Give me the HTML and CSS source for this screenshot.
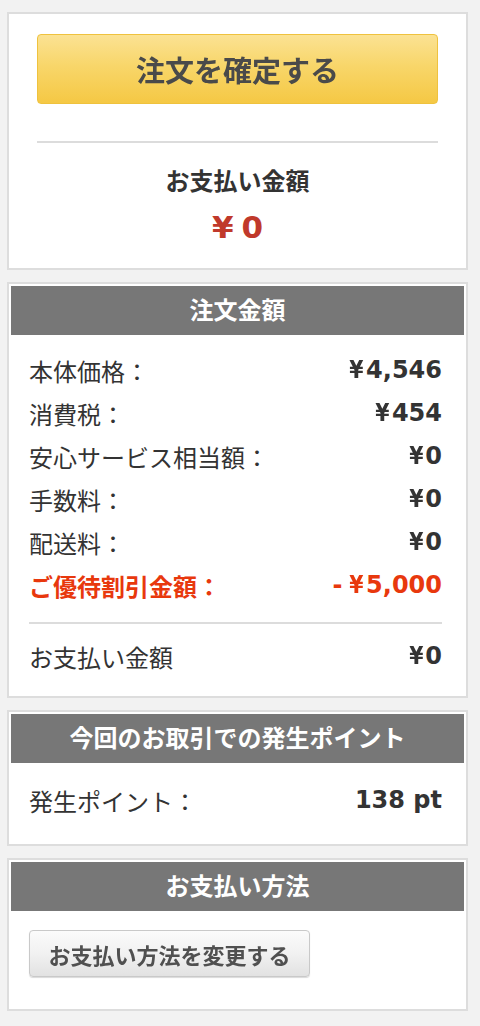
FILE: index.html
```html
<!DOCTYPE html>
<html lang="ja">
<head>
<meta charset="utf-8">
<title>注文確認</title>
<link rel="stylesheet" href="styles.css">
</head>
<body>
<div class="page">
  <section class="card card-confirm">
    <button class="btn-confirm"><span class="btn-label">注文を確定する</span></button>
    <hr class="divider">
    <div class="pay-title">お支払い金額</div>
    <div class="pay-amount"><span class="yen">¥</span>0</div>
  </section>

  <section class="card">
    <h2 class="card-head">注文金額</h2>
    <div class="card-body body-summary">
      <div class="row"><span class="label">本体価格：</span><span class="value"><span class="yen">¥</span>4,546</span></div>
      <div class="row"><span class="label">消費税：</span><span class="value"><span class="yen">¥</span>454</span></div>
      <div class="row"><span class="label">安心サービス相当額：</span><span class="value"><span class="yen">¥</span>0</span></div>
      <div class="row"><span class="label">手数料：</span><span class="value"><span class="yen">¥</span>0</span></div>
      <div class="row"><span class="label">配送料：</span><span class="value"><span class="yen">¥</span>0</span></div>
      <div class="row row-discount"><span class="label">ご優待割引金額：</span><span class="value"><span class="minus">-</span><span class="yen">¥</span>5,000</span></div>
      <hr class="divider divider-summary">
      <div class="row"><span class="label">お支払い金額</span><span class="value"><span class="yen">¥</span>0</span></div>
    </div>
  </section>

  <section class="card">
    <h2 class="card-head">今回のお取引での発生ポイント</h2>
    <div class="card-body body-points">
      <div class="row"><span class="label">発生ポイント：</span><span class="value">138 pt</span></div>
    </div>
  </section>

  <section class="card">
    <h2 class="card-head">お支払い方法</h2>
    <div class="card-body body-method">
      <button class="btn-change"><span class="btn-label">お支払い方法を変更する</span></button>
    </div>
  </section>
</div>
</body>
</html>
```

FILE: styles.css
```css
* { box-sizing: border-box; }
html, body {
  margin: 0;
  padding: 0;
  background: #f2f2f2;
}
body {
  font-family: "Noto Sans CJK JP", "Noto Sans", sans-serif;
  color: #333;
}
.page {
  width: 480px;
  padding: 12px 12px 0 7px;
}
.card {
  background: #fff;
  border: 2px solid #dddddd;
  padding: 2px;
  margin: 0 0 12px 0;
}
.card-confirm {
  padding: 20px 28px 21px 28px;
  display: flex;
  flex-direction: column;
  align-items: stretch;
}
.btn-confirm {
  height: 70px;
  border: 1px solid #efc23e;
  border-radius: 4px;
  background: linear-gradient(to bottom, #fbe293 0%, #f8d66a 45%, #f5c844 100%);
  font-family: "Noto Sans CJK JP", sans-serif;
  font-weight: 700;
  font-size: 29px;
  color: #4a4a4a;
  padding: 0;
  cursor: pointer;
}
.btn-label {
  display: inline-block;
  filter: blur(0.6px);
}
.divider {
  border: 0;
  height: 2px;
  background: #dcdcdc;
  margin: 37px 0 0 0;
}
.pay-title {
  margin-top: 19px;
  text-align: center;
  font-weight: 700;
  font-size: 24px;
  line-height: 36px;
  color: #333;
}
.pay-amount {
  margin-top: 9px;
  text-align: center;
  font-family: "DejaVu Sans", "Noto Sans CJK JP", sans-serif;
  font-weight: 700;
  font-size: 31px;
  line-height: 40px;
  color: #c0392b;
}
.pay-amount .yen {
  margin-right: 8px;
}
.card-head {
  margin: 0;
  height: 49px;
  background: #777777;
  color: #fff;
  font-size: 24px;
  font-weight: 700;
  line-height: 45px;
  text-align: center;
}
.card-body {
  padding: 0 22px 0 18px;
}
.body-summary {
  padding-top: 14px;
  padding-bottom: 16px;
}
.body-points {
  padding-top: 16px;
  padding-bottom: 20px;
}
.body-method {
  padding-top: 19px;
  padding-bottom: 30px;
}
.row {
  display: flex;
  justify-content: space-between;
  align-items: center;
  height: 43px;
}
.label {
  font-size: 24px;
  line-height: 43px;
  color: #333;
}
.value {
  font-family: "DejaVu Sans", "Noto Sans CJK JP", sans-serif;
  font-weight: 700;
  font-size: 24px;
  line-height: 43px;
  color: #333;
}
.value .yen {
  display: inline-block;
  transform: scaleX(0.85);
  margin-right: 1px;
}
.value .minus {
  margin-right: 6px;
}
.row-discount .label,
.row-discount .value {
  color: #e8380d;
  font-weight: 700;
}
.divider-summary {
  margin: 15px 0 11px 0;
}
.btn-change {
  display: block;
  width: 281px;
  height: 47px;
  border: 1px solid #c9c9c9;
  border-radius: 4px;
  background: linear-gradient(to bottom, #fbfbfb 0%, #f1f1f1 50%, #e2e2e2 100%);
  box-shadow: 0 1px 1px rgba(0, 0, 0, 0.15);
  font-family: "Noto Sans CJK JP", sans-serif;
  font-weight: 700;
  font-size: 22px;
  color: #505050;
  padding: 0;
  cursor: pointer;
}
```
